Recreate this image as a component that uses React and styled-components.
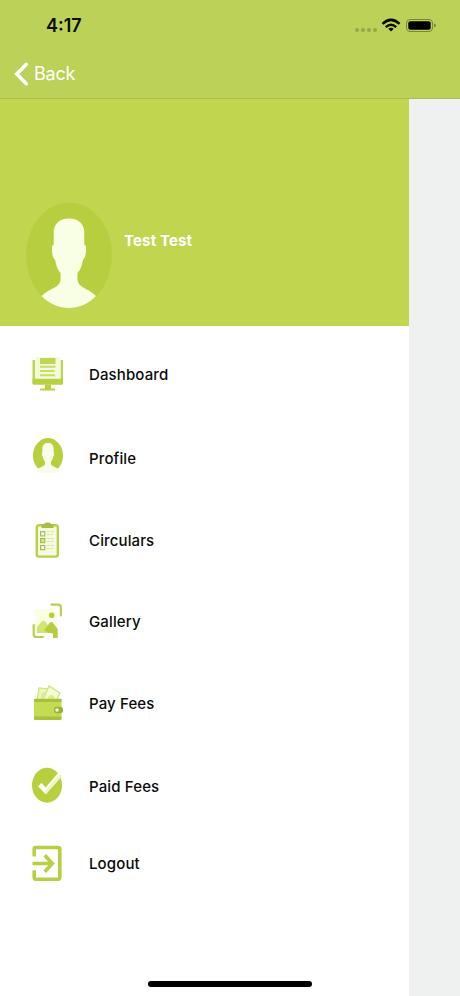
import React from "react";
import styled, { createGlobalStyle } from "styled-components";

const GlobalStyle = createGlobalStyle`
  html, body {
    margin: 0;
    padding: 0;
  }
  * {
    box-sizing: border-box;
  }
`;

const Screen = styled.div`
  display: flex;
  flex-direction: column;
  position: relative;
  width: 460px;
  height: 996px;
  overflow: hidden;
  background-color: #eef1f0;
  font-family: Inter, "Liberation Sans", sans-serif;
`;

const Header = styled.header`
  flex: none;
  height: 99px;
  background-color: #bbd157;
  border-bottom: 1px solid #a9bd4d;
`;

const StatusBar = styled.div`
  display: flex;
  align-items: center;
  justify-content: space-between;
  height: 50px;
  padding: 1px 24px 0 46px;
`;

const Time = styled.span`
  font-size: 18px;
  font-weight: 600;
  letter-spacing: 0;
  color: #0b0d05;
`;

const StatusIcons = styled.svg`
  display: block;
  width: 82px;
  height: 18px;
`;

const BackButton = styled.button`
  display: flex;
  align-items: center;
  gap: 5px;
  height: 47px;
  padding: 0 0 0 14px;
  border: 0;
  background: none;
  color: #fff;
  font-family: inherit;
  font-size: 18px;
  font-weight: 400;
  letter-spacing: -0.25px;
`;

const Drawer = styled.aside`
  flex: 1;
  width: 409px;
  background-color: #fff;
`;

const UserPanel = styled.div`
  display: flex;
  height: 227px;
  padding: 103px 0 0 26px;
  background-color: #c2d54f;
`;

const UserImage = styled.svg`
  display: block;
  width: 86px;
  height: 106px;
`;

const UserName = styled.p`
  margin: 30px 0 0 12px;
  color: #fff;
  font-size: 15px;
  line-height: 18px;
  font-weight: 700;
  letter-spacing: 0.15px;
`;

const Menu = styled.nav`
  display: flex;
  flex-direction: column;
`;

const MenuItem = styled.div`
  display: flex;
  align-items: center;
  height: 40px;
  margin-top: ${props => props.$space}px;
  padding-left: 29px;
`;

const MenuIcon = styled.svg`
  display: block;
  width: 36px;
  height: 40px;
  margin-right: 24px;
`;

const MenuText = styled.span`
  padding-top: ${props => props.$drop || 0}px;
  color: #0a0a0a;
  font-size: 15px;
  line-height: 20px;
  font-weight: 500;
  letter-spacing: 0.13px;
`;

const HomeIndicator = styled.div`
  position: absolute;
  left: 148px;
  bottom: 9px;
  width: 164px;
  height: 6px;
  border-radius: 3px;
  background-color: #000;
`;

const Person = () => (
  <>
    <ellipse cx="43" cy="53.3" rx="43" ry="52.8" fill="#b7cf3f" />
    <path
      fill="#f8ffe4"
      d="M43 16.5C33 16.5 27.7 22 27.7 31V43C25.5 43 25.8 47 26.2 51C26.7 55 27.8 57 29 57.5C30 63 31.5 68 34.5 71V78C34.5 84 25 87 20.5 90C18.5 91.5 17 92.5 15.5 94C31 110 55 110 70 94C68.5 92.5 67 91.5 65 90C61 87 51.5 84 51.5 78V71C54.5 68 56 63 57 57.5C58.2 57 59.3 55 59.8 51C60.2 47 60.5 43 58.3 43V31C58.3 22 53 16.5 43 16.5Z"
    />
  </>
);

const Dashboard = () => (
  <>
    <path fill="#bfd64c" d="M3.5 6H6V25H31.5V6H34V29Q34 30.5 32.5 30.5H5Q3.5 30.5 3.5 29Z" />
    <path fill="#b9d13f" d="M3.5 24.5H34V29Q34 30.5 32.5 30.5H5Q3.5 30.5 3.5 29Z" />
    <path fill="#f2fadb" d="M6 7.5H7V3H30.5V7.5H31.5V24.5H6Z" />
    <rect x="11" y="4" width="15.5" height="6" fill="#bdd653" />
    <path stroke="#c8df62" strokeWidth="2" d="M11 12.8H26.5M11 17H25.5M11 21.2H26" />
    <path fill="#b9d13f" d="M16 30.5H22V34.5H26V36.5H11V34.5H16Z" />
  </>
);

const Profile = () => (
  <>
    <ellipse cx="19" cy="17.5" rx="15" ry="17.5" fill="#b8d03b" />
    <path
      fill="#f7fde8"
      d="M19 5C15.5 5 13.4 7 13.4 10.5V14.5C12.6 14.5 12.8 18 13.9 19C14.2 21 15.1 22.7 16 23.7V26C16 28.5 10.5 28.5 8 32V35H30V32C27.5 28.5 22 28.5 22 26V23.7C22.9 22.7 23.8 21 24.1 19C25.2 18 25.4 14.5 24.6 14.5V10.5C24.6 7 22.5 5 19 5Z"
    />
  </>
);

const Circulars = () => (
  <>
    <rect x="7.8" y="4.3" width="21" height="31.3" rx="2" fill="#f5fbe3" stroke="#b8d149" strokeWidth="2.4" />
    <path fill="#a9bf42" d="M12.5 7V3.5Q12.5 3 13.5 3H15Q15.5 1.6 18.5 1.6T22 3H23.5Q24.5 3 24.5 3.5V7Z" />
    <g fill="none" stroke="#a0bb45" strokeWidth="1.1">
      <rect x="11.6" y="10.7" width="4.2" height="4.2" />
      <rect x="11.6" y="17.5" width="4.2" height="4.2" fill="#d3e87b" />
      <rect x="11.6" y="24.5" width="4.2" height="4.2" />
    </g>
    <path
      fill="none"
      stroke="#d5e69f"
      strokeWidth="1"
      strokeDasharray="3 1"
      d="M18 10.5H25M18 13.5H24M18 17.5H25M18 20.5H24M18 24.5H25M18 27.5H24"
    />
  </>
);

const Gallery = () => (
  <>
    <path fill="#f9ffe2" d="M6 7H25L28 11V31H6Z" />
    <g fill="none" stroke="#b9d050" strokeWidth="2.2" strokeLinecap="round">
      <path d="M22.5 2.7H29Q31.9 2.7 31.9 5.5V13.5" />
      <path d="M4.7 23.2V32.5Q4.7 35 7.2 35H14" />
    </g>
    <circle cx="22.7" cy="13.2" r="2.8" fill="#b9ce3d" />
    <path fill="#d0e66c" d="M8 31V25L13 19.5Q14.5 18 16 19.5L18.5 22.5L25 31H8Z" />
    <path fill="#b5cd43" d="M15 28.5L20.8 20.8Q22.3 19 24 21L28.7 27V36H24V31.5L19 30.5Z" />
  </>
);

const PayFees = () => (
  <>
    <g stroke="#cfe27e" strokeWidth="1.2">
      <path fill="#ecf7bd" d="M8 17L10 4L20 5L18 18Z" />
      <path fill="#f3fbd7" d="M13 18L20 2L31 9L26 19Z" />
    </g>
    <path fill="#d9ec92" d="M12 10L16 7.5L17.5 11L14.5 15H12ZM18.5 16Q19 11 22.5 11T25.5 16Z" />
    <rect x="5" y="14.5" width="27.5" height="21.5" rx="1.5" fill="#c4dc52" />
    <path fill="#a8c03a" d="M5 15H32.5V18H5ZM5 32.5H32.5V34.5Q32.5 36 31 36H6.5Q5 36 5 34.5Z" />
    <rect x="25" y="22.7" width="9" height="6.6" rx="2.8" fill="#98b03a" />
    <circle cx="28" cy="26" r="1.8" fill="#f3ffca" />
  </>
);

const PaidFees = () => (
  <>
    <ellipse cx="18" cy="19.2" rx="15" ry="17.5" fill="#b8d03d" />
    <path fill="#fbfff0" d="M9 20.5L12.5 16.8L16.5 21.5L29.5 6.5L33 10L16.8 28.3Z" />
    <path fill="#edf5c8" d="M16.8 28.3V24.5L31 8L33 10Z" />
  </>
);

const Logout = () => (
  <>
    <path
      fill="none"
      stroke="#b7cf43"
      strokeWidth="3.6"
      strokeLinejoin="round"
      d="M5.2 12.5V5Q5.2 3.5 6.8 3.5H29Q30.8 3.5 30.8 5V33.5Q30.8 35.2 29 35.2H6.8Q5.2 35.2 5.2 33.5V26.2"
    />
    <path fill="none" stroke="#b7cf43" strokeWidth="3.6" d="M3.5 19.5H23.5M15.8 11.3L23.3 19.5L15.8 27.7" />
  </>
);

const menuItems = [
  { label: "Dashboard", Icon: Dashboard, space: 28, drop: 1 },
  { label: "Profile", Icon: Profile, space: 44, drop: 1 },
  { label: "Circulars", Icon: Circulars, space: 43 },
  { label: "Gallery", Icon: Gallery, space: 41 },
  { label: "Pay Fees", Icon: PayFees, space: 42 },
  { label: "Paid Fees", Icon: PaidFees, space: 42, drop: 1 },
  { label: "Logout", Icon: Logout, space: 38 }
];

const App = () => (
  <Screen>
    <GlobalStyle />
    <Header>
      <StatusBar>
        <Time>4:17</Time>
        <StatusIcons viewBox="0 0 82 18">
          <g fill="#95a747">
            <circle cx="3" cy="13" r="2" />
            <circle cx="9" cy="13" r="2" />
            <circle cx="15" cy="13" r="2" />
            <circle cx="21" cy="13" r="2" />
          </g>
          <g fill="none" stroke="#080a03" strokeWidth="2.5">
            <path d="M28.5 6.8Q37 -1 45.5 6.8" />
            <path d="M31.8 10.1Q37 5.5 42.2 10.1" />
          </g>
          <path fill="#080a03" d="M34.3 11.8Q37 9.8 39.7 11.8L37 14.6Z" />
          <rect x="52.5" y="2.5" width="26" height="12" rx="3.5" fill="none" stroke="#788638" />
          <rect x="54.3" y="4.2" width="22.4" height="8.6" rx="2" fill="#000" />
          <path fill="#788638" d="M80 6.5Q82 7 82 8.5T80 10.5Z" />
        </StatusIcons>
      </StatusBar>
      <BackButton>
        <svg width="15" height="24" viewBox="0 0 15 24">
          <path d="M12.3 2.3L2.8 12L12.3 21.7" fill="none" stroke="#fff" strokeWidth="3.6" strokeLinecap="round" />
        </svg>
        Back
      </BackButton>
    </Header>
    <Drawer>
      <UserPanel>
        <UserImage viewBox="0 0 86 106">
          <Person />
        </UserImage>
        <UserName>Test Test</UserName>
      </UserPanel>
      <Menu>
        {menuItems.map(({ label, Icon, space, drop }) => (
          <MenuItem key={label} $space={space}>
            <MenuIcon viewBox="0 0 36 40">
              <Icon />
            </MenuIcon>
            <MenuText $drop={drop}>{label}</MenuText>
          </MenuItem>
        ))}
      </Menu>
    </Drawer>
    <HomeIndicator />
  </Screen>
);

export default App;
